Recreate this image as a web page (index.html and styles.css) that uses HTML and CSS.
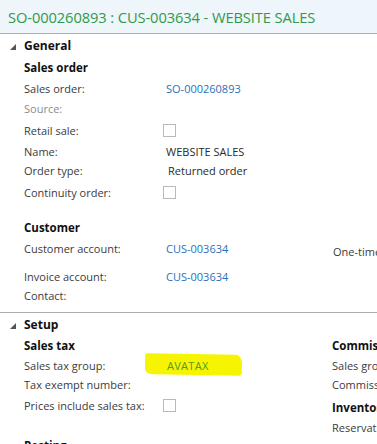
FILE: index.html
```html
<!DOCTYPE html>
<html lang="en">
<head>
<meta charset="utf-8">
<title>SO-000260893 : CUS-003634 - WEBSITE SALES</title>
<link rel="stylesheet" href="styles.css">
</head>
<body>
<header class="title-bar">
  <h1 class="title">SO-000260893 : CUS-003634 - WEBSITE SALES</h1>
</header>

<section class="fasttab">
  <div class="tab-head">
    <svg class="tri" width="6" height="6" viewBox="0 0 6 6"><polygon points="6,0 6,6 0,6"/></svg>
    <span>General</span>
  </div>
  <div class="tab-body">
    <div class="group">
      <div class="group-title">Sales order</div>
      <div class="row h20"><span class="label">Sales order:</span><a class="value link">SO-000260893</a></div>
      <div class="row h20"><span class="label disabled">Source:</span></div>
      <div class="row h24"><span class="label">Retail sale:</span><span class="value"><span class="checkbox"></span></span></div>
      <div class="row h18"><span class="label">Name:</span><span class="value">WEBSITE SALES</span></div>
      <div class="row h20"><span class="label">Order type:</span><span class="value indent">Returned order</span></div>
      <div class="row h24"><span class="label">Continuity order:</span><span class="value"><span class="checkbox"></span></span></div>
    </div>
    <div class="group customer">
      <div class="group-title">Customer</div>
      <div class="row h20"><span class="label">Customer account:</span><a class="value link">CUS-003634</a><span class="extra">One-time customer:</span></div>
      <div class="row h20 gap8"><span class="label">Invoice account:</span><a class="value link">CUS-003634</a></div>
      <div class="row h18"><span class="label">Contact:</span></div>
    </div>
  </div>
</section>

<section class="fasttab setup">
  <div class="tab-head">
    <svg class="tri" width="6" height="6" viewBox="0 0 6 6"><polygon points="6,0 6,6 0,6"/></svg>
    <span>Setup</span>
  </div>
  <div class="tab-body cols">
    <div class="col-left">
      <div class="group">
        <div class="group-title h20">Sales tax</div>
        <div class="row h20"><span class="label">Sales tax group:</span><span class="value"><span class="marked">AVATAX</span></span></div>
        <div class="row h18"><span class="label">Tax exempt number:</span></div>
        <div class="row h24"><span class="label">Prices include sales tax:</span><span class="value"><span class="checkbox"></span></span></div>
      </div>
      <div class="group posting">
        <div class="group-title">Posting</div>
      </div>
    </div>
    <div class="col-right">
      <div class="group">
        <div class="group-title h20">Commission</div>
        <div class="row h20"><span class="label">Sales group:</span></div>
        <div class="row h18"><span class="label">Commission group:</span></div>
      </div>
      <div class="group inventory">
        <div class="group-title">Inventory</div>
        <div class="row h18"><span class="label">Reservation:</span></div>
      </div>
    </div>
  </div>
</section>
</body>
</html>
```

FILE: styles.css
```css
html, body {
  margin: 0;
  padding: 0;
  background: #ffffff;
  overflow: hidden;
}
body {
  width: 377px;
  height: 444px;
  font-family: "Open Sans", "Noto Sans", "Liberation Sans", sans-serif;
  font-size: 11px;
  color: #3b3b3b;
}

.title-bar {
  height: 33px;
  background: #eef5fb;
  border-bottom: 1px solid #a7afb7;
  display: flex;
  align-items: center;
  padding-left: 8px;
}
.title {
  margin: 0;
  font-weight: 400;
  font-size: 14.7px;
  color: #2f9a4a;
  white-space: nowrap;
  letter-spacing: -0.1px;
  padding-top: 1px;
}

.fasttab {
  display: flex;
  flex-direction: column;
}
.fasttab.setup {
  border-top: 1px solid #acacac;
  margin-top: 8px;
}
.tab-head {
  height: 22px;
  display: flex;
  align-items: center;
  font-weight: 700;
  font-size: 12px;
  color: #111;
}
.tri {
  fill: #555;
  margin-left: 10px;
  margin-right: 8px;
  margin-top: 3px;
}
.tab-body {
  padding-left: 24px;
}
.tab-body.cols {
  display: flex;
}
.col-left {
  width: 308px;
  flex: none;
}
.col-right {
  flex: none;
  width: 120px;
}

.group {
  display: flex;
  flex-direction: column;
}
.group.customer {
  margin-top: 12px;
}
.group.posting {
  margin-top: 17px;
}
.group.inventory {
  margin-top: 3px;
}
.group-title {
  height: 22px;
  display: flex;
  align-items: center;
  font-weight: 700;
  font-size: 11.5px;
  color: #111;
  white-space: nowrap;
}
.group-title.h20 {
  height: 20px;
}

.row {
  display: flex;
  align-items: center;
  white-space: nowrap;
}
.row.h18 { height: 18px; }
.row.h20 { height: 20px; }
.row.h24 { height: 24px; }
.row.gap8 { margin-top: 8px; }

.label {
  width: 142px;
  flex: none;
}
.label.disabled {
  color: #8c8c8c;
}
.value {
  width: 166px;
  flex: none;
  display: flex;
  align-items: center;
  color: #2a2a2a;
}
.value.indent {
  padding-left: 2px;
  width: 164px;
}
.link {
  color: #2a6fba;
  text-decoration: none;
}
.extra {
  flex: none;
  padding-left: 1px;
  margin-top: 6px;
}

.checkbox {
  width: 11px;
  height: 11px;
  border: 1px solid #b9b9b9;
  background: #fff;
  display: inline-block;
  margin-left: -3px;
}

.marked {
  position: relative;
  z-index: 0;
  isolation: isolate;
  color: #4f9a2c;
  padding-left: 1px;
  letter-spacing: 0.3px;
}
.marked::before {
  content: "";
  position: absolute;
  left: -21px;
  top: -4px;
  width: 97px;
  height: 21px;
  background: #f6f400;
  border-radius: 2px 6px 3px 8px / 3px 9px 4px 6px;
  transform: rotate(1deg);
  z-index: -1;
}
```
